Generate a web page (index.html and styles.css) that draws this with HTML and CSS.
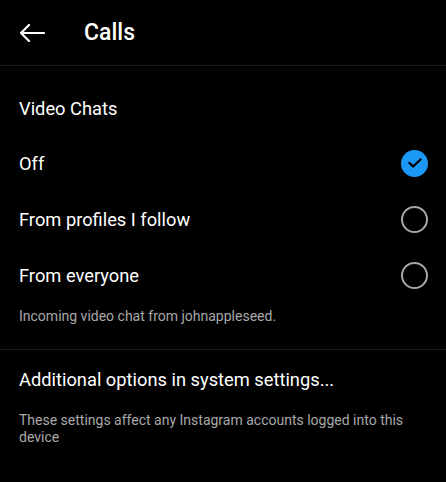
FILE: index.html
```
<!DOCTYPE html>
<html>
<head>
<meta charset="utf-8">
<title>Calls</title>
<link rel="stylesheet" href="styles.css">
</head>
<body>
  <div class="topbar">
    <svg class="back" width="26" height="18" viewBox="0 0 26 18">
      <path d="M25 9H2M10 1L2 9l8 8" fill="none" stroke="#fff" stroke-width="2.2" stroke-linecap="round" stroke-linejoin="round"/>
    </svg>
    <span class="title">Calls</span>
  </div>

  <div class="section">
    <div class="heading">Video Chats</div>
    <div class="option">
      <span>Off</span>
      <span class="radio checked">
        <svg width="14" height="10" viewBox="0 0 14 10"><path d="M1.5 5l3.6 3.5L12.5 1.5" fill="none" stroke="#000" stroke-width="2.4" stroke-linecap="round" stroke-linejoin="round"/></svg>
      </span>
    </div>
    <div class="option">
      <span>From profiles I follow</span>
      <span class="radio"></span>
    </div>
    <div class="option">
      <span>From everyone</span>
      <span class="radio"></span>
    </div>
    <p class="note first">Incoming video chat from johnappleseed.</p>
  </div>

  <div class="section">
    <div class="option link">Additional options in system settings...</div>
    <p class="note last">These settings affect any Instagram accounts logged into this device</p>
  </div>
</body>
</html>
```
FILE: styles.css
```
body {
  margin: 0;
  background: #000;
  color: #fff;
  font-family: Roboto, "Noto Sans", sans-serif;
}
.topbar {
  height: 65px;
  display: flex;
  align-items: center;
  padding: 0 19px;
  border-bottom: 1px solid #1c1c1c;
}
.back { display: block; margin-top: 1px; }
.title {
  margin-left: 39px;
  font-size: 23px;
  font-weight: 500;
}
.section { border-bottom: 1px solid #1c1c1c; padding: 0 19px; }
.section:last-child { border-bottom: none; }
.heading {
  padding: 31px 0 14px;
  font-size: 18.3px;
  line-height: 24px;
}
.option {
  height: 56px;
  display: flex;
  align-items: center;
  justify-content: space-between;
  font-size: 18.3px;
}
.option.link { height: 58px; }
.radio {
  width: 23px;
  height: 23px;
  border: 2px solid #a8a8a8;
  border-radius: 50%;
  margin-right: -1px;
  display: flex;
  align-items: center;
  justify-content: center;
}
.radio.checked {
  width: 27px;
  height: 27px;
  border: none;
  background: #1a98f4;
}
.radio.checked svg { display: block; }
.note {
  margin: 0;
  color: #a8a8a8;
  font-size: 14px;
  line-height: 17px;
}
.note.first { padding: 5px 0 24px; }
.note.last { padding: 4px 0; }
```
